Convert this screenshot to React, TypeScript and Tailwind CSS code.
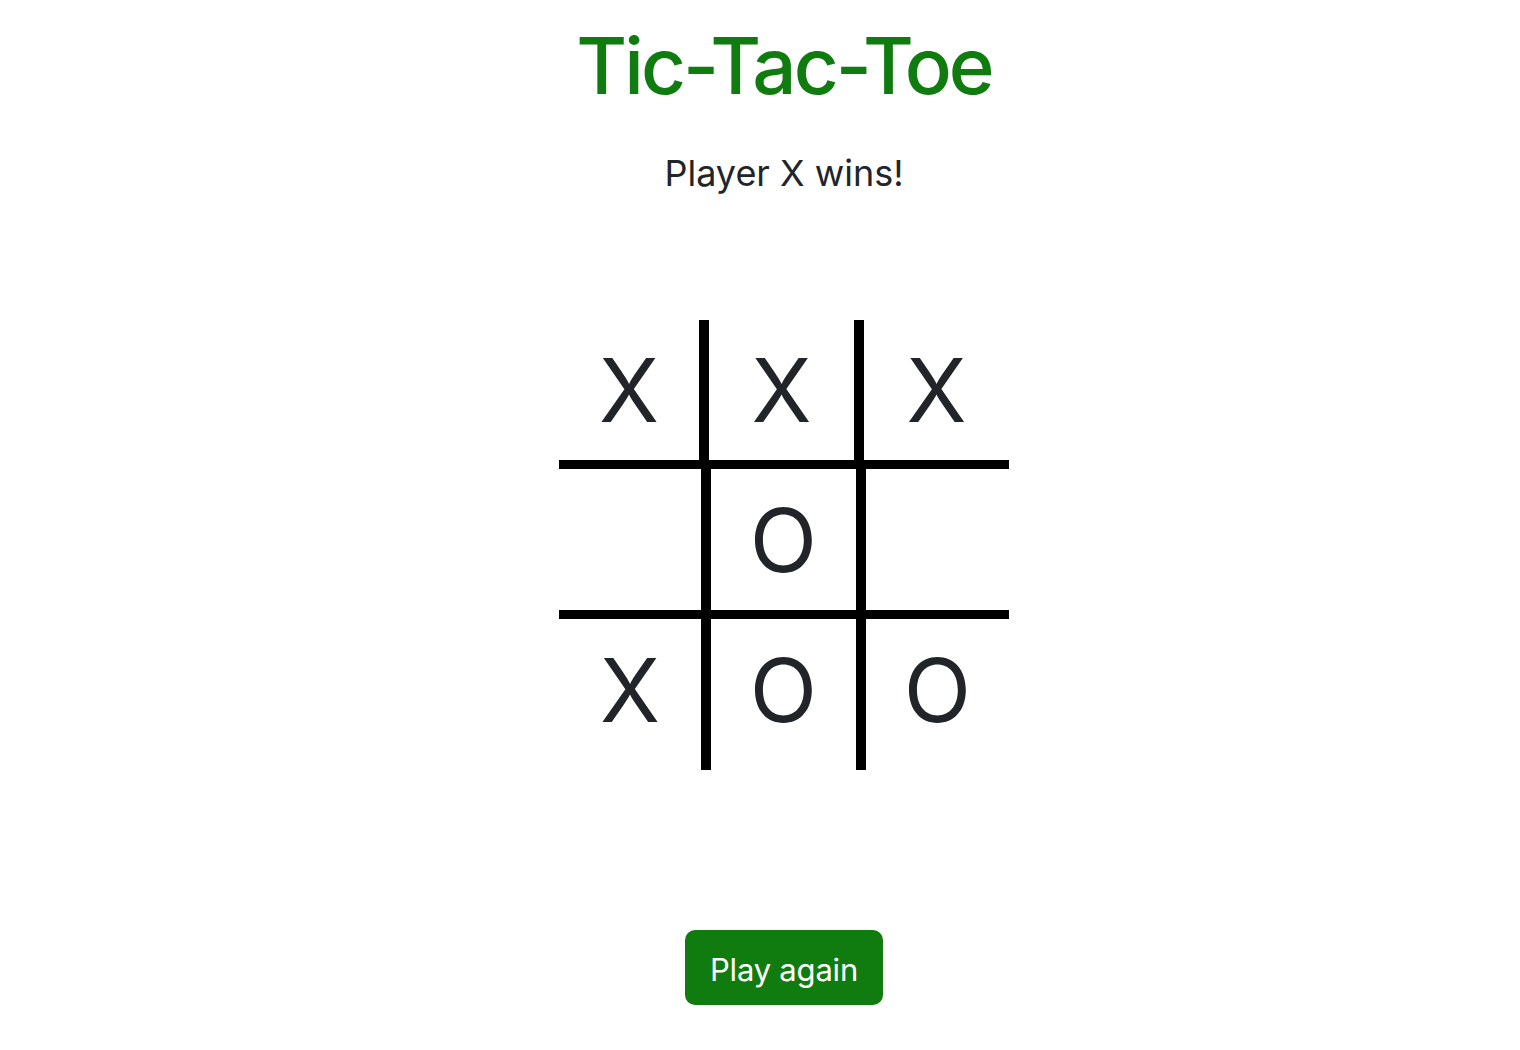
import React, { useState } from "react";

type Mark = "X" | "O" | null;

const START: Mark[] = ["X", "X", "X", null, "O", null, "X", "O", "O"];

// grid lines in the board are slightly offset between the first row and the rest
const firstRowWidths = ["w-[150px] border-r-[10px]", "w-[155px] border-r-[10px]", "w-[145px]"];
const otherRowWidths = ["w-[152px] border-r-[10px]", "w-[155px] border-r-[10px]", "w-[143px]"];

export default function App() {
  const [squares, setSquares] = useState<Mark[]>(START);

  const rows = [0, 1, 2];

  return (
    <div
      className="min-h-[1050px] w-full bg-white pl-12 flex flex-col items-center text-[#212529]"
      style={{ fontFamily: "Inter, 'Noto Sans', sans-serif" }}
    >
      <h1 className="mt-[27px] text-[78px] leading-none font-medium text-[#107c10] tracking-[-3px]">
        Tic-Tac-Toe
      </h1>
      <p className="mt-[50px] text-[36px] leading-none">Player X wins!</p>

      {/* Board */}
      <div className="mt-[129px] w-[450px] flex flex-col">
        {rows.map((r) => (
          <div
            key={r}
            className={
              r === 0
                ? "flex h-[149px] border-b-[9px] border-black"
                : r === 1
                ? "flex h-[150px] border-b-[9px] border-black"
                : "flex h-[151px]"
            }
          >
            {rows.map((c) => {
              const i = r * 3 + c;
              const widths = r === 0 ? firstRowWidths : otherRowWidths;
              return (
                <button
                  key={c}
                  onClick={() => {
                    if (squares[i]) return;
                    const next = squares.slice();
                    next[i] = "X";
                    setSquares(next);
                  }}
                  className={`${widths[c]} h-full border-black flex items-center justify-center text-[88px] leading-none ${
                    r === 2 ? "pb-[10px]" : ""
                  }`}
                >
                  {squares[i]}
                </button>
              );
            })}
          </div>
        ))}
      </div>

      <button
        onClick={() => setSquares(Array(9).fill(null))}
        className="mt-[160px] h-[75px] px-[25px] pt-[24px] pb-[20px] rounded-[10px] bg-[#107c10] text-white text-[31px] leading-none tracking-[-0.2px]"
      >
        Play again
      </button>
    </div>
  );
}
